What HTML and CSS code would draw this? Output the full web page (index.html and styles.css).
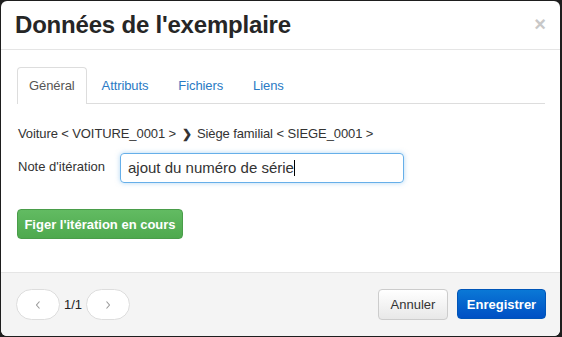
FILE: index.html
```html
<!DOCTYPE html>
<html lang="fr">
<head>
<meta charset="utf-8">
<link rel="stylesheet" href="styles.css">
</head>
<body>
<div class="modal">
  <div class="modal-header">
    <h3 class="title">Données de l'exemplaire</h3>
    <span class="close">×</span>
  </div>
  <div class="modal-body">
    <ul class="tabs">
      <li class="tab active">Général</li>
      <li class="tab">Attributs</li>
      <li class="tab">Fichiers</li>
      <li class="tab">Liens</li>
    </ul>
    <p class="path">Voiture &lt; VOITURE_0001 &gt; <span class="chev">❯</span> Siège familial &lt; SIEGE_0001 &gt;</p>
    <div class="field">
      <label class="label">Note d'itération</label>
      <div class="input">ajout du numéro de série<span class="caret"></span></div>
    </div>
    <button class="btn-green">Figer l'itération en cours</button>
  </div>
  <div class="modal-footer">
    <div class="pager">
      <button class="pill"><svg width="8" height="10" viewBox="0 0 8 10"><path d="M5.5 1.5 L2.5 5 L5.5 8.5" fill="none" stroke="#999" stroke-width="1.1"/></svg></button>
      <span class="count">1/1</span>
      <button class="pill"><svg width="8" height="10" viewBox="0 0 8 10"><path d="M2.5 1.5 L5.5 5 L2.5 8.5" fill="none" stroke="#999" stroke-width="1.1"/></svg></button>
    </div>
    <div class="actions">
      <button class="btn-default">Annuler</button>
      <button class="btn-primary">Enregistrer</button>
    </div>
  </div>
</div>
</body>
</html>
```
FILE: styles.css
```css
html, body { margin: 0; padding: 0; }
body {
  background: #1e1e1e;
  width: 562px;
  height: 337px;
  overflow: hidden;
  font-family: "Liberation Sans", Arial, sans-serif;
  color: #333;
}
.modal {
  margin: 1px 1px 0 1px;
  width: 559px;
  height: 335px;
  background: #fff;
  border-radius: 6px;
  overflow: hidden;
  display: flex;
  flex-direction: column;
  box-sizing: border-box;
}
.modal-header {
  height: 48px;
  border-bottom: 1px solid #e5e5e5;
  display: flex;
  align-items: center;
  justify-content: space-between;
  padding: 0 14px 0 14px;
  flex: none;
}
.title {
  margin: 0;
  font-size: 24px;
  font-weight: bold;
  color: #262626;
  letter-spacing: -0.2px;
}
.close {
  font-size: 20px;
  font-weight: bold;
  color: #c8c8c8;
  line-height: 1;
  margin-top: -2px;
}
.modal-body {
  flex: 1;
  padding: 17px 15px 0 16px;
}
.tabs {
  list-style: none;
  margin: 0;
  padding: 0;
  display: flex;
  border-bottom: 1px solid #ddd;
  height: 36px;
}
.tab {
  font-size: 13px;
  color: #2a7ac4;
  padding: 0 14px;
  line-height: 36px;
  border: 1px solid transparent;
  border-bottom: none;
  border-radius: 4px 4px 0 0;
  margin-bottom: -1px;
  letter-spacing: -0.1px;
}
.tab.active {
  color: #555;
  border-color: #ddd;
  background: #fff;
  height: 37px;
  box-sizing: border-box;
  padding: 0 11px 0 11px;
  line-height: 35px;
}
.path {
  margin: 22px 0 0 1px;
  font-size: 13px;
  color: #333;
  letter-spacing: -0.1px;
}
.chev {
  font-size: 12px;
  font-weight: bold;
  display: inline-block;
  margin: 0 2px;
}
.field {
  display: flex;
  align-items: center;
  margin-top: 12px;
}
.label {
  font-size: 13px;
  width: 102px;
  padding-left: 1px;
  margin-top: -4px;
}
.input {
  width: 284px;
  height: 30px;
  box-sizing: border-box;
  border: 1px solid #66afe9;
  border-radius: 4px;
  box-shadow: 0 0 5px rgba(102,175,233,0.5);
  font-size: 15px;
  color: #333;
  padding: 5px 0 0 7px;
}
.caret {
  display: inline-block;
  width: 1px;
  height: 16px;
  background: #000;
  vertical-align: -3px;
}
.btn-green {
  display: block;
  margin-top: 26px;
  margin-left: 0;
  width: 166px;
  height: 30px;
  border: 1px solid #4a9d4a;
  border-radius: 4px;
  background: linear-gradient(#62bb62, #4ea94e);
  color: #fff;
  font-family: inherit;
  font-size: 13px;
  font-weight: bold;
  padding: 0;
}
.modal-footer {
  flex: none;
  height: 63px;
  border-top: 1px solid #e5e5e5;
  background: #f4f4f4;
  display: flex;
  align-items: center;
  justify-content: space-between;
  padding: 0 14px 0 15px;
}
.pager {
  display: flex;
  align-items: center;
}
.pill {
  width: 44px;
  height: 31px;
  border: 1px solid #ddd;
  border-radius: 16px;
  background: #fff;
  padding: 0;
  display: flex;
  align-items: center;
  justify-content: center;
}
.count {
  font-size: 13px;
  color: #222;
  margin: 0 4px 0 4px;
}
.actions {
  display: flex;
  gap: 9px;
}
.btn-default {
  width: 70px;
  height: 31px;
  border: 1px solid #ccc;
  border-radius: 4px;
  background: linear-gradient(#fff, #e8e8e8);
  font-family: inherit;
  font-size: 13px;
  color: #333;
  padding: 0;
}
.btn-primary {
  width: 89px;
  height: 30px;
  border: 1px solid #0055b8;
  border-radius: 4px;
  background: linear-gradient(#0a78d6, #0050c4);
  font-family: inherit;
  font-size: 13px;
  font-weight: bold;
  color: #fff;
  padding: 0;
}
```
